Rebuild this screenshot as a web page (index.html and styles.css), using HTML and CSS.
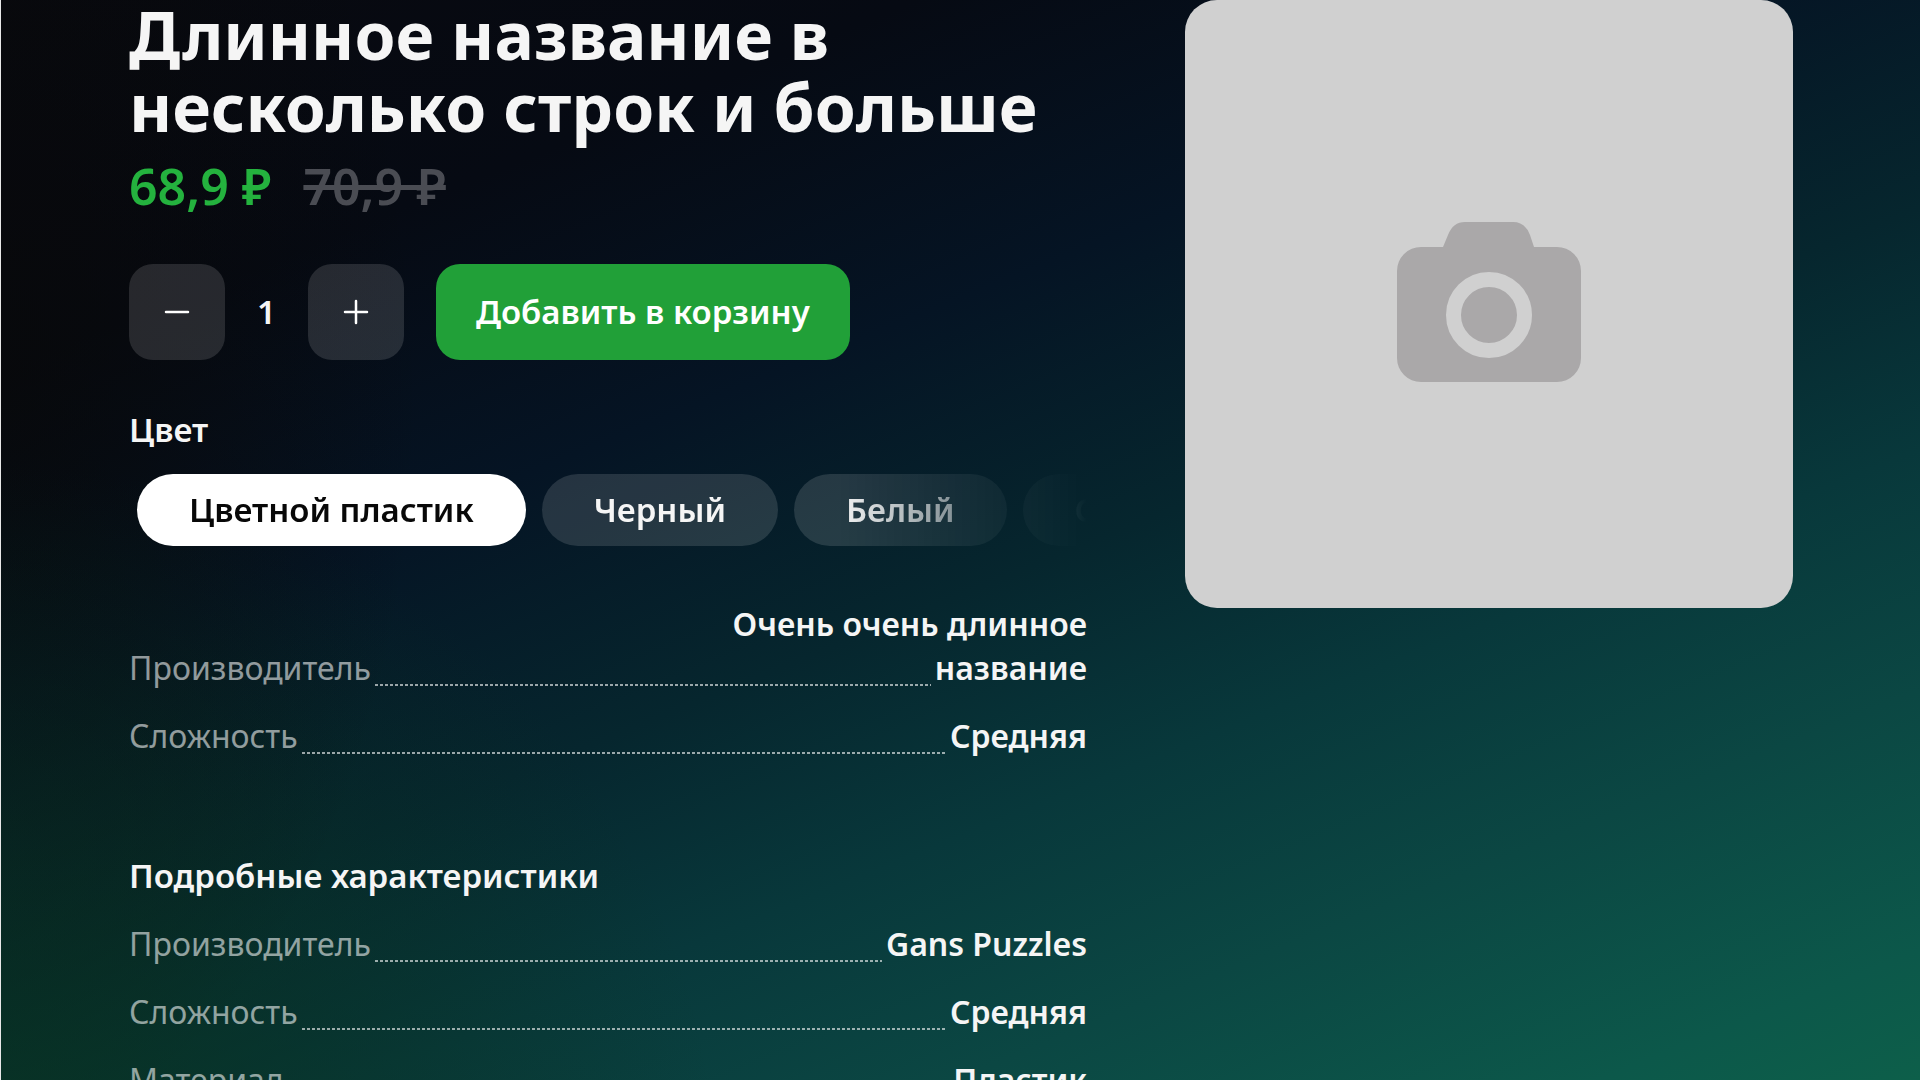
FILE: index.html
```html
<!DOCTYPE html>
<html lang="ru">
<head>
<meta charset="utf-8">
<meta name="viewport" content="width=device-width, initial-scale=1">
<title>Длинное название в несколько строк и больше</title>
<link rel="stylesheet" href="styles.css">
</head>
<body>
<main class="product">
  <div class="info">
    <h1 class="title">Длинное название в несколько строк и больше</h1>
    <p class="prices">
      <span class="price">68,9 ₽</span>
      <s class="old-price">70,9 ₽</s>
    </p>
    <div class="actions">
      <button class="button step" type="button" aria-label="Уменьшить количество">
        <svg class="icon" viewBox="0 0 32 32" aria-hidden="true"><path d="M5 16h22"/></svg>
      </button>
      <output class="count">1</output>
      <button class="button step" type="button" aria-label="Увеличить количество">
        <svg class="icon" viewBox="0 0 32 32" aria-hidden="true"><path d="M5 16h22M16 5v22"/></svg>
      </button>
      <button class="button primary" type="button">Добавить в корзину</button>
    </div>
    <section class="variants">
      <h2 class="heading">Цвет</h2>
      <div class="chips">
        <button class="chip chip-active" type="button">Цветной пластик</button>
        <button class="chip" type="button">Черный</button>
        <button class="chip" type="button">Белый</button>
        <button class="chip" type="button">Серый</button>
      </div>
    </section>
    <dl class="specs">
      <div class="spec"><dt>Производитель</dt><dd><span class="upper-line">Очень очень длинное</span> название</dd></div>
      <div class="spec"><dt>Сложность</dt><dd>Средняя</dd></div>
    </dl>
    <section class="details">
      <h2 class="heading">Подробные характеристики</h2>
      <dl class="specs">
        <div class="spec"><dt>Производитель</dt><dd>Gans Puzzles</dd></div>
        <div class="spec"><dt>Сложность</dt><dd>Средняя</dd></div>
        <div class="spec"><dt>Материал</dt><dd>Пластик</dd></div>
      </dl>
    </section>
  </div>
  <div class="photo">
    <svg class="camera" viewBox="0 0 184 164" role="img" aria-label="Нет фото">
      <path class="camera-body" d="M24 25H46L51 13Q56 0 68 0H116Q128 0 133 13L137 25H160A24 24 0 0 1 184 49V136A24 24 0 0 1 160 160H24A24 24 0 0 1 0 136V49A24 24 0 0 1 24 25Z"/>
      <circle class="camera-ring" cx="92" cy="93" r="35.5"/>
    </svg>
  </div>
</main>
</body>
</html>
```
FILE: styles.css
```css
* { box-sizing: border-box; }

body {
  margin: 0;
  min-height: 100vh;
  overflow: hidden;
  border-left: 1px solid #e8e8e8;
  color: #f5f5f5;
  font: 600 33px/44px "Noto Sans", sans-serif;
  background:
    radial-gradient(circle at 0 110%, rgba(8, 52, 32, 0.8) 0%, rgba(8, 52, 32, 0) 32%),
    radial-gradient(ellipse 22% 70% at 0 35%, rgba(8, 8, 8, 0.7) 0%, rgba(8, 8, 8, 0) 100%),
    linear-gradient(158deg, #08090f 0%, #060a13 20%, #051424 37%, #06262e 53%, #08383b 66%, #0b4743 79%, #0c584a 93%, #0d5f4a 100%);
}

h1, h2, p, dl, dd { margin: 0; }

.product {
  display: grid;
  grid-template-columns: minmax(0, 1fr) 608px;
  gap: 98px;
  align-items: start;
  height: 100vh;
  padding: 0 127px 0 128px;
}

.title {
  margin-top: -2px;
  font-size: 66px;
  line-height: 72px;
  font-weight: 700;
}

.heading { font: inherit; }

.prices {
  display: flex;
  gap: 32px;
  padding-top: 12px;
  font-size: 50px;
  line-height: 64px;
}

.price { color: #24b23e; }
.old-price { color: #4a4c53; }

.actions {
  display: flex;
  align-items: center;
  gap: 32px;
  padding-top: 46px;
}

.button {
  height: 96px;
  border: 0;
  border-radius: 24px;
  color: #fff;
  font: inherit;
}

.step {
  display: grid;
  place-items: center;
  width: 96px;
  padding: 0;
  background: rgba(255, 255, 255, 0.13);
}

.primary {
  padding: 0 40px;
  background: #21a038;
}

.icon {
  width: 32px;
  height: 32px;
  fill: none;
  stroke: #fff;
  stroke-width: 2.5;
  stroke-linecap: round;
}

.variants { padding-top: 48px; }

.chips {
  display: flex;
  gap: 16px;
  padding: 22px 0 0 8px;
  overflow: hidden;
  -webkit-mask-image: linear-gradient(90deg, #000 74%, transparent 100%);
  mask-image: linear-gradient(90deg, #000 74%, transparent 100%);
}

.chip {
  flex: none;
  height: 72px;
  padding: 0 52px;
  border: 0;
  border-radius: 36px;
  background: rgba(255, 255, 255, 0.13);
  color: #f5f5f5;
  font: inherit;
}

.chip-active {
  background: #fff;
  color: #080808;
}

.specs {
  display: grid;
  gap: 24px;
  padding-top: 56px;
  font-size: 32px;
}

.spec {
  display: flex;
  align-items: flex-end;
  gap: 4px;
}

.spec dt {
  display: contents;
  color: rgba(255, 255, 255, 0.56);
  font-weight: 400;
}

.spec dt::after {
  content: "";
  flex: 1;
  height: 2px;
  margin-bottom: 4px;
  background: repeating-linear-gradient(90deg, rgba(255, 255, 255, 0.6) 0 3px, transparent 3px 5px);
}

.spec dd { text-align: right; }

/* The upper line hangs over the leader without widening the value column. */
.upper-line {
  display: flex;
  justify-content: flex-end;
  width: 0;
  margin-left: auto;
  white-space: nowrap;
}

.details { padding-top: 96px; }
.details .specs { padding-top: 24px; }

.photo {
  display: grid;
  place-items: center;
  aspect-ratio: 1;
  border-radius: 32px;
  background: #d0d0d0;
}

.camera { width: 184px; }
.camera-body { fill: #aaa8a9; }
.camera-ring { fill: none; stroke: #d0d0d0; stroke-width: 15; }
```
